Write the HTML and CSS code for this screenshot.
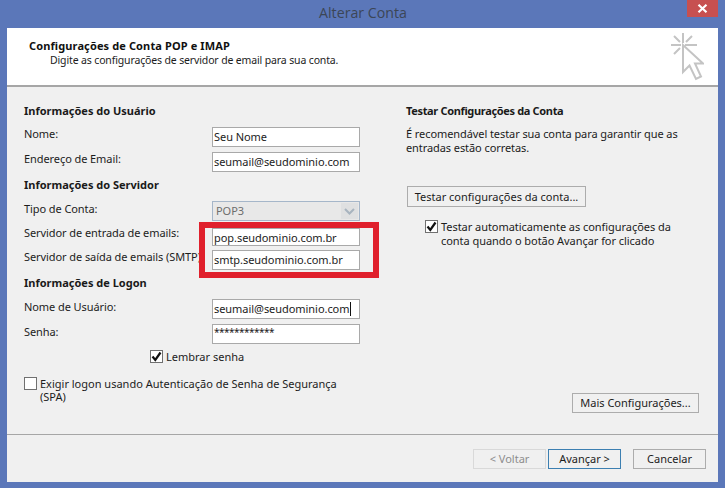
FILE: index.html
```html
<!DOCTYPE html>
<html lang="pt-BR">
<head>
<meta charset="utf-8">
<title>Alterar Conta</title>
<link rel="stylesheet" href="styles.css">
</head>
<body>
<div class="window">
  <div class="titlebar">
    <span class="title">Alterar Conta</span>
    <button class="close" aria-label="Fechar">
      <svg width="11" height="9" viewBox="0 0 11 9"><path d="M1.5 .8 9.5 8.2M9.5 .8 1.5 8.2" stroke="#fff" stroke-width="2.2" fill="none"/></svg>
    </button>
  </div>
  <div class="dialog">
    <header class="head">
      <div class="head-text">
        <h1 class="head-title">Configurações de Conta POP e IMAP</h1>
        <p class="head-sub">Digite as configurações de servidor de email para sua conta.</p>
      </div>
      <svg class="wizard" width="34" height="50" viewBox="0 0 34 50">
        <g stroke="#c4c4c4" stroke-width="2" fill="none">
          <path d="M13 1V11M1 13H11M15 13H27M4 4 10 10M22 4 16 10M4 22 10 16"/>
          <path d="M13 13V40L19.500 33.500 26 47 31 44.500 25 31.500 33 31.500Z" fill="#fff"/>
        </g>
      </svg>
    </header>
    <main class="body">
      <section class="left">
        <h2 class="section first">Informações do Usuário</h2>
        <div class="row r-name"><label>Nome:</label><div class="field">Seu Nome</div></div>
        <div class="row r-mail"><label>Endereço de Email:</label><div class="field">seumail@seudominio.com</div></div>
        <h2 class="section s-server">Informações do Servidor</h2>
        <div class="row r-type"><label>Tipo de Conta:</label>
          <div class="field select"><span>POP3</span>
            <span class="arrow"><svg width="11" height="7" viewBox="0 0 11 7"><path d="M1 1 5.500 5.500 10 1" stroke="#a8b4bf" stroke-width="2" fill="none"/></svg></span>
          </div>
        </div>
        <div class="row r-in"><label>Servidor de entrada de emails:</label><div class="field">pop.seudominio.com.br</div></div>
        <div class="row r-out"><label>Servidor de saída de emails (SMTP)</label><div class="field">smtp.seudominio.com.br</div></div>
        <h2 class="section s-logon">Informações de Logon</h2>
        <div class="row r-user"><label>Nome de Usuário:</label><div class="field">seumail@seudominio.com<span class="caret"></span></div></div>
        <div class="row r-pass"><label>Senha:</label><div class="field pass">************</div></div>
        <div class="check c-remember"><span class="box"><svg width="11" height="11" viewBox="0 0 11 11"><path d="M1.500 5.500 4.300 9 9.500 1.500" stroke="#111" stroke-width="2.200" fill="none"/></svg></span><span>Lembrar senha</span></div>
        <div class="check c-spa"><span class="box"></span><span class="wrap">Exigir logon usando Autenticação de Senha de Segurança (SPA)</span></div>
      </section>
      <section class="right">
        <h2 class="section first narrow">Testar Configurações da Conta</h2>
        <p class="desc">É recomendável testar sua conta para garantir que as entradas estão corretas.</p>
        <button class="btn b-test">Testar configurações da conta...</button>
        <div class="check c-auto"><span class="box"><svg width="11" height="11" viewBox="0 0 11 11"><path d="M1.500 5.500 4.300 9 9.500 1.500" stroke="#111" stroke-width="2.200" fill="none"/></svg></span><span class="wrap">Testar automaticamente as configurações da conta quando o botão Avançar for clicado</span></div>
        <div class="more"><button class="btn b-more">Mais Configurações...</button></div>
      </section>
      <div class="highlight"></div>
    </main>
    <footer class="foot">
      <button class="btn b-nav disabled">&lt; Voltar</button>
      <button class="btn b-nav primary">Avançar &gt;</button>
      <button class="btn b-nav cancel">Cancelar</button>
    </footer>
  </div>
</div>
</body>
</html>
```
FILE: styles.css
```css
* { box-sizing: border-box; }
html, body { margin: 0; height: 100%; }
body {
  width: 725px;
  height: 488px;
  overflow: hidden;
  background: #5b77b9;
  font-family: "Noto Sans", sans-serif;
  font-size: 11px;
  color: #1c1c1c;
}
.window { display: flex; flex-direction: column; height: 488px; padding: 0 7px 6px 7px; }
.titlebar { height: 28px; flex: none; position: relative; display: flex; justify-content: center; }
.title { font-family: "Open Sans", sans-serif; font-size: 14.2px; color: #3b4656; line-height: 25px; padding-left: 1px; }
.close {
  position: absolute; right: 0; top: 0; width: 31px; height: 17px; padding: 0; border: 0;
  background: #c75050; display: flex; align-items: center; justify-content: center;
}
.dialog { flex: 1; display: flex; flex-direction: column; background: #f0f0f0; }
.head {
  height: 59px; flex: none; background: #fff; border-bottom: 2px solid #a6a6a6;
  display: flex; justify-content: space-between; padding: 4px 14px 0 22px;
}
.head-title { margin: 0; padding-top: 7px; font-size: 11px; font-weight: bold; line-height: 13px; letter-spacing: 0.12px; color: #111; }
.head-sub { margin: 0; padding: 2px 0 0 21px; font-size: 10.5px; line-height: 13px; letter-spacing: -0.14px; }
.body { flex: 1; position: relative; display: flex; padding: 17px 0 0 17px; }
.left { width: 382px; flex: none; display: flex; flex-direction: column; }
.right { flex: 1; display: flex; flex-direction: column; }
.section { margin: 0; font-size: 11px; font-weight: bold; line-height: 13px; color: #1a1a1a; }
.narrow { letter-spacing: -0.34px; }
.s-server { margin-top: 6px; }
.s-logon { margin-top: 6px; }
.row { display: flex; align-items: flex-start; }
.row label { width: 188px; flex: none; line-height: 13px; white-space: nowrap; letter-spacing: -0.08px; }
.field {
  width: 148px; height: 20px; flex: none; background: #fff; border: 1px solid #a9a9a9;
  padding: 0 1px; line-height: 18px; white-space: nowrap; position: relative; letter-spacing: -0.05px;
}
.r-name { margin-top: 10px; }
.r-mail { margin-top: 5px; }
.r-type { margin-top: 10px; }
.r-type label { padding-top: 1px; }
.r-in { margin-top: 7px; }
.r-in label { margin-top: -2px; }
.r-in .field { height: 18px; line-height: 17px; }
.r-out { margin-top: 4px; }
.r-user { margin-top: 10px; }
.r-user label { padding-top: 1px; }
.r-pass { margin-top: 5px; }
.r-pass label { padding-top: 1px; }
.r-pass .field { line-height: 15px; font-size: 10px; letter-spacing: -0.5px; }
.select { background: #e8e8e8; border-color: #a5b6c9; color: #6d6d6d; display: flex; justify-content: space-between; padding-right: 0; padding-left: 3px; }
.arrow { width: 17px; margin: 1px; background: #dfe0e1; display: flex; align-items: center; justify-content: center; }
.caret { position: absolute; width: 1px; height: 14px; background: #111; top: 2px; margin-left: 1px; }
.check { display: flex; align-items: flex-start; line-height: 13.5px; }
.box {
  width: 13px; height: 13px; flex: none; background: #fff; border: 1px solid #707070;
  display: flex; align-items: center; justify-content: center; margin-right: 3px;
}
.c-remember { margin: 6px 0 0 126px; }
.c-spa { margin-top: 13px; width: 330px; }
.desc { margin: 10px 0 0; line-height: 14px; width: 290px; letter-spacing: -0.08px; }
.btn { font: inherit; color: #1c1c1c; background: #f0f0f0; border: 1px solid #acacac; padding: 0; line-height: 18px; }
.b-test { width: 179px; height: 21px; margin: 31px 0 0 1px; }
.c-auto { margin: 13px 0 0 19px; width: 270px; letter-spacing: -0.05px; }
.more { margin-top: auto; display: flex; justify-content: flex-end; padding: 0 19px 21px 0; }
.b-more { width: 127px; height: 20px; }
.foot { height: 48px; flex: none; border-top: 1px solid #a6a6a6; display: flex; padding: 14px 0 0 466px; }
.b-nav { width: 73px; height: 20px; margin-right: 2px; }
.disabled { color: #8d8d8d; border-color: #d9d9d9; }
.primary { border-color: #3c7fb1; }
.cancel { margin-left: 10px; margin-right: 0; }
.highlight { position: absolute; left: 192px; top: 135px; width: 180px; height: 56px; border: 6px solid #e0202c; pointer-events: none; }
```
